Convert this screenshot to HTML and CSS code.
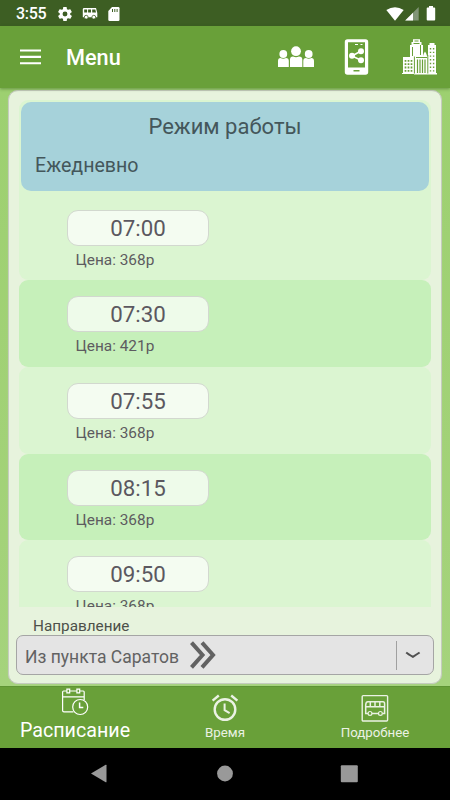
FILE: index.html
```html
<!DOCTYPE html>
<html lang="ru">
<head>
<meta charset="utf-8">
<title>Расписание</title>
<link rel="stylesheet" href="styles.css">
</head>
<body>
<div class="screen">
  <header class="status">
    <span class="clock">3:55</span>
    <svg class="st-gear" width="14" height="14" viewBox="2 2 20 20"><path fill="#fff" d="M19.4 13a7.500 7.500 0 0 0 0-2l2.100-1.600a.5.5 0 0 0 .1-.6l-2-3.500a.5.5 0 0 0-.6-.2l-2.500 1a7.300 7.300 0 0 0-1.700-1L14.400 2.400a.5.5 0 0 0-.5-.4h-4a.5.5 0 0 0-.5.4L9.100 5.100a7.300 7.300 0 0 0-1.700 1l-2.500-1a.5.5 0 0 0-.6.2l-2 3.500a.5.5 0 0 0 .1.600L4.500 11a7.500 7.500 0 0 0 0 2l-2.100 1.600a.5.5 0 0 0-.1.600l2 3.500c.1.200.4.300.6.200l2.500-1c.5.400 1.100.7 1.700 1l.4 2.700c0 .2.200.4.500.4h4c.2 0 .5-.2.500-.4l.4-2.700c.6-.3 1.200-.6 1.700-1l2.500 1c.2.100.5 0 .6-.2l2-3.500a.5.5 0 0 0-.1-.6zM12 15.500a3.500 3.500 0 1 1 0-7 3.500 3.500 0 0 1 0 7z"/></svg>
    <svg class="st-bus" width="16" height="12" viewBox="0 0 16 12"><path fill="#fff" fill-rule="evenodd" d="M1.500 0h12.500l1.300 5v4.200H.8V1zM2.200 1.500v3h2.900v-3zM6.100 1.500v3H9v-3zM10.200 1.500v3h3.800l-.7-3z"/><g fill="#fff" stroke="#3d5e23" stroke-width=".8"><circle cx="4.200" cy="9.200" r="1.900"/><circle cx="11.800" cy="9.200" r="1.900"/></g></svg>
    <svg class="st-sd" width="12" height="14" viewBox="0 0 12 14"><path fill="#fff" d="M4 0h6.300Q11.500 0 11.500 1.200V12.800Q11.500 14 10.300 14H1.500Q.3 14 .3 12.800V4z"/><path stroke="#3d5e23" stroke-width="1" d="M4.500 2v3M6.800 2v3M9.100 2v3"/></svg>
    <div class="st-right">
      <svg width="18" height="14" viewBox="0 0 18 14"><path fill="#fff" d="M.3 3Q9-2.500 17.700 3L9 13.700z"/></svg>
      <svg width="14" height="14" viewBox="0 0 14 14"><path fill="#819577" d="M13.700 0v13.500H.2z"/><path fill="#fff" d="M8 5.700v7.800H.2z"/></svg>
      <svg class="st-bat" width="10" height="15" viewBox="0 0 10 15"><path fill="#fff" d="M3 0h4v1.500h1.300q.9 0 .9.900v11.200q0 .9-.9.900H1.600q-.9 0-.9-.9V2.400q0-.9.900-.9H3z"/></svg>
    </div>
  </header>

  <div class="toolbar">
    <svg class="burger" width="21" height="16" viewBox="0 0 21 16"><path stroke="#fff" stroke-width="2.100" d="M0 1.500h21M0 7.900h21M0 14.200h21"/></svg>
    <h1>Menu</h1>
    <div class="actions">
      <svg width="36" height="22" viewBox="0 0 36 22"><g fill="#fff"><circle cx="18" cy="5.200" r="4.900"/><circle cx="5.300" cy="8" r="3.900"/><circle cx="30.700" cy="8" r="3.900"/><path d="M12 21v-7.500q0-3 3-3 3 1.500 6 0 3.300 0 3.300 3V21zM0 21v-6q0-3 2.500-3 2.800 1.500 5.500 0 2.800 0 2.800 3v6zM25.300 21v-6q0-3 2.700-3 2.700 1.500 5.400 0 2.600 0 2.600 3v6z"/></g></svg>
      <svg class="phone" width="25" height="36" viewBox="0 0 25 36"><path fill="#fff" fill-rule="evenodd" d="M3.500.3h18Q24.200.3 24.200 3v30q0 2.700-2.700 2.700h-18Q.8 35.700.8 33V3Q.8.300 3.500.3zM4 3.200v25.300h17V3.200zM9.500 31v1.400h6V31z"/><path stroke="#fff" stroke-width="1.100" d="M11 5.500h3M16.500 5.500h2"/><path stroke="#fff" stroke-width="1.500" fill="none" d="m17 12-9 5 9 4.300"/><g fill="#fff"><circle cx="17" cy="12.200" r="3"/><circle cx="8" cy="16.800" r="3"/><circle cx="17" cy="21.200" r="3"/></g></svg>
      <svg class="city" width="35" height="36" viewBox="0 0 35 36"><g fill="#fff"><path d="M8 18V6h1.500V3H11V.3h7V3h1.500v3H21v11h-8v18H0V34h1V18z"/><path d="M26 35V6h1.500V4h5v2H34v28h1v1.500H12V17h9l.8-2.500 1.200-2 1.200 2 .8 2.500h1z"/></g><g fill="none" stroke="#69a039"><path stroke-width="1" d="M10.500 8v9M18.500 6v10M12.400 17.500v17M25.800 16v18.500"/><path stroke-width="1" d="M12.500 2h4M11.500 4.500h6"/><path stroke-width="1" d="M14 18.500h11"/><path stroke-width="1.200" d="M15.500 20.500v13.500M18 20.500v13.500M20.500 20.500v13.500M23 20.500v13.500"/><path stroke-width="1.700" stroke-dasharray="1.800 1.500" d="M3.500 21v12.500M6.500 21v12.500M9.500 21v12.500"/><path stroke-width="1.400" stroke-dasharray="1.400 2.300" d="M28.500 9v24M31.600 9v24"/></g></svg>
    </div>
  </div>

  <main class="content">
    <section class="panel">
      <div class="list">
        <div class="row first">
          <div class="mode"><h2>Режим работы</h2><p>Ежедневно</p></div>
          <div class="time">07:00</div><div class="price">Цена: 368р</div>
        </div>
        <div class="row alt"><div class="time">07:30</div><div class="price">Цена: 421р</div></div>
        <div class="row"><div class="time">07:55</div><div class="price">Цена: 368р</div></div>
        <div class="row alt"><div class="time">08:15</div><div class="price">Цена: 368р</div></div>
        <div class="row"><div class="time">09:50</div><div class="price">Цена: 368р</div></div>
      </div>
      <div class="label">Направление</div>
      <div class="select">
        <span>Из пункта Саратов</span>
        <svg class="chev" width="26" height="28" viewBox="0 0 26 28"><path fill="none" stroke="#626262" stroke-width="4" d="m1.500 1.700 11 12.300-11 12.300M12 1.700 23 14 12 26.300"/></svg>
        <div class="drop"><svg width="16" height="8" viewBox="0 0 16 8"><path fill="none" stroke="#505050" stroke-width="2" d="M1.200 1.500 Q3 3 7.900 5.800 Q12.500 3 14.600 1.500"/></svg></div>
      </div>
    </section>
  </main>

  <nav class="tabs">
    <div class="tab active">
      <svg width="28" height="28" viewBox="0 0 28 28"><g fill="none" stroke="#fff" stroke-width="1.200"><path d="M12.500 23.800H3q-1.400 0-1.400-1.400V4q0-1 1-1H5.800M8.800 3h7M18.800 3h3.400q1 0 1 1v8M1.600 8.800h21.600"/><path d="M5.900 1.200h2.800v3.600H5.900zM15.900 1.200h2.800v3.600h-2.800z"/><circle cx="19.200" cy="19" r="7.500"/><path stroke-width="1.500" d="M18.600 14.600v5h3.700"/></g></svg>
      <span>Расписание</span>
    </div>
    <div class="tab">
      <svg width="28" height="28" viewBox="0 0 28 28"><g fill="none" stroke="#ebf2e4" stroke-width="2.400"><circle cx="14" cy="15.500" r="10.300"/><path d="m1.600 6.700 6.200-5.200M26.400 6.700l-6.200-5.200"/><path stroke-width="2" d="M13.600 9.500v6.700l5 3"/></g></svg>
      <span>Время</span>
    </div>
    <div class="tab">
      <svg width="28" height="28" viewBox="0 0 28 28"><g fill="none" stroke="#ebf2e4" stroke-width="1.200"><rect x="1.200" y="1.600" width="25.400" height="25.400" rx="1" stroke-width="1.400"/><path stroke-width="1.500" d="M7 19.500H4.700V11q.2-3.300 2-3.300H22q1.600 0 1.600 2v9.800h-2M11 19.500h6.500M4.700 12.800h19M9.300 8v4.500M14 8v4.500M18.800 8v4.500"/><circle cx="9" cy="19.400" r="1.900"/><circle cx="19.400" cy="19.400" r="1.900"/></g></svg>
      <span>Подробнее</span>
    </div>
  </nav>

  <footer class="sysnav">
    <svg width="18" height="20" viewBox="0 0 18 20"><path fill="#999" d="M0 9.500 14.700.8q.8-.4.800.5v16.400q0 .9-.8.500z"/></svg>
    <svg width="18" height="20" viewBox="0 0 18 20"><circle cx="9" cy="9.500" r="7.900" fill="#999"/></svg>
    <svg width="18" height="20" viewBox="0 0 18 20"><rect x=".8" y="1.200" width="17" height="17" rx="1" fill="#999"/></svg>
  </footer>
</div>
</body>
</html>
```
FILE: styles.css
```css
* { box-sizing: border-box; margin: 0; padding: 0; }
body { width: 450px; height: 800px; overflow: hidden; font-family: Roboto, "Noto Sans", sans-serif; }
svg { display: block; flex: none; }
.screen { width: 450px; height: 800px; display: flex; flex-direction: column; }

.status { height: 26px; flex: none; background: #3d5e23; color: #fff; display: flex; align-items: center; padding: 1px 14px 0 16px; }
.clock { font-size: 16px; line-height: 24px; font-weight: 500; width: 42px; letter-spacing: -.3px; padding-top: 1px; }
.st-gear { margin-right: 10px; }
.st-bus { margin-right: 10px; }
.st-right { margin-left: auto; display: flex; align-items: center; gap: 1px; }
.st-right .st-bat { margin-left: 6px; }

.toolbar { height: 62px; flex: none; background: #69a039; display: flex; align-items: center; padding: 0 13px 0 20px; color: #fff; box-shadow: 0 1px 3px rgba(40, 70, 20, .45); position: relative; z-index: 1; }
.burger { margin-right: 25px; }
.toolbar h1 { font-size: 21.700px; font-weight: 500; line-height: 30px; padding-top: 2px; }
.actions { margin-left: auto; display: flex; align-items: center; }
.phone { margin: 0 33px 0 30px; }

.content { flex: 1; min-height: 0; background: linear-gradient(#9dd070, #a5d37c); padding: 2px 8px; }
.panel { height: 594px; background: #e7f3dd; border: 1px solid #c5ccbe; border-radius: 10px; padding: 9px 7px 0; box-shadow: 0 0 1px #bfc7b8; }
.list { height: 507px; margin: 0 3px; overflow: hidden; }
.row { height: 86.800px; background: #dbf5d1; border-radius: 9px; padding-top: 16px; }
.row.first { height: 180px; padding: 2px 2px 0; }
.row.alt { background: #c6f0ba; }
.mode { height: 89px; border-radius: 10px; background: #a6d2da; color: #44575b; margin-bottom: 19px; padding-top: 10px; }
.mode h2 { font-size: 22px; line-height: 30px; font-weight: 400; text-align: center; }
.mode p { font-size: 19.600px; line-height: 26px; padding: 11px 0 0 14px; }
.time { width: 142px; height: 36px; margin-left: 48px; border: 1px solid #d2d8cf; border-radius: 11px; background: rgba(255, 255, 255, .7); color: #5b5860; font-size: 22.300px; line-height: 35px; text-align: center; }
.price { margin-left: 56.500px; color: #5d5b60; font-size: 15.400px; line-height: 20px; padding-top: 4px; }
.first .time { margin-left: 46px; }
.first .price { margin-left: 54.500px; }
.label { margin-left: 17px; font-size: 15.300px; line-height: 20px; height: 28px; padding-top: 9px; color: #4d504a; }
.select { height: 40px; border: 1px solid #a5a5a5; border-radius: 7px; background: #e4e4e4; display: flex; align-items: center; padding-left: 8px; color: #626262; font-size: 17.500px; }
.select span { padding-top: 3px; }
.chev { margin-left: 11px; }
.drop { margin-left: auto; width: 37px; height: 29px; border-left: 1px solid #a0a0a0; display: flex; align-items: center; padding-left: 8px; }

.tabs { height: 62px; flex: none; background: #69a039; border-top: 1px solid #5e9433; display: grid; grid-template-columns: repeat(3, 1fr); color: #ebf2e4; }
.tab { display: flex; flex-direction: column; align-items: center; padding-top: 7px; font-size: 13.300px; line-height: 21px; }
.tab.active { color: #fff; font-size: 19.700px; line-height: 30px; padding-top: 1px; }
.sysnav { height: 52px; flex: none; background: #000; display: flex; justify-content: space-between; align-items: center; padding: 0 92px 0 91px; }
```
